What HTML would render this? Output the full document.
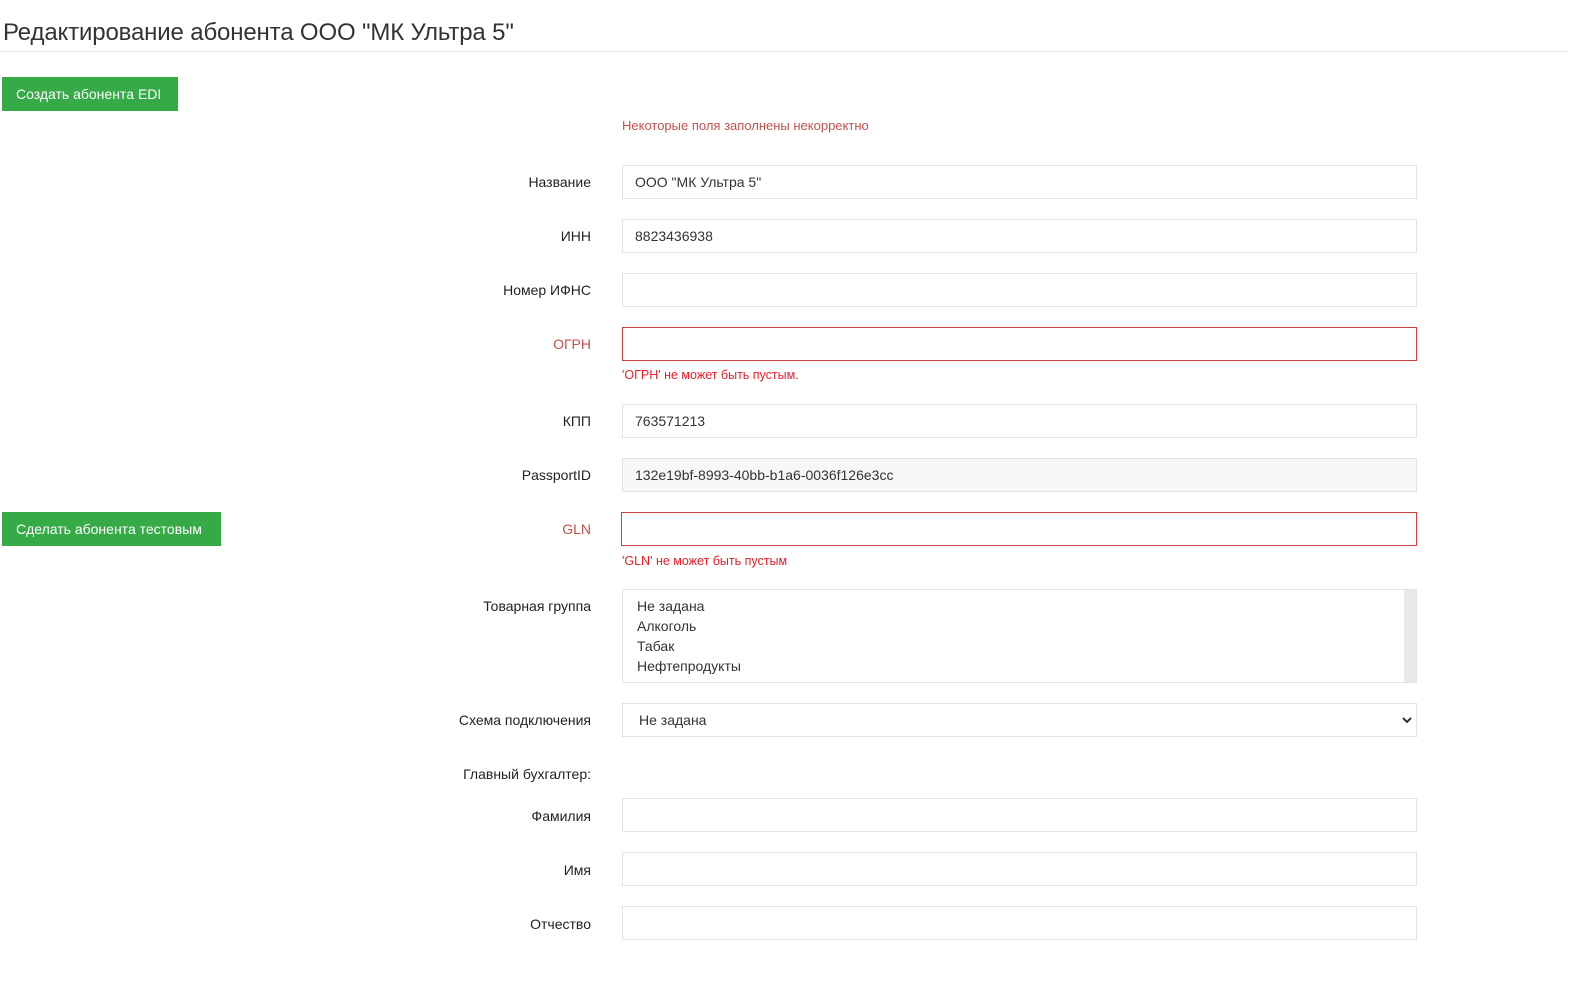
<!DOCTYPE html>
<html><head><meta charset="utf-8"><style>
body{margin:0;width:1571px;height:986px;background:#fff;font-family:"Liberation Sans","DejaVu Sans",sans-serif;color:#222;position:relative;overflow:hidden}
.a{position:absolute}
h1{position:absolute;left:3px;top:19px;margin:0;font-weight:normal;font-size:24px;color:#333;letter-spacing:-0.15px}
.hr{position:absolute;left:0;top:51px;width:1568px;height:1px;background:#eaeaea}
.btn{position:absolute;left:2px;height:34px;background:#37aa48;color:#fff;font-size:14px;line-height:34px;padding:0 14px;box-sizing:border-box}
.lbl{position:absolute;right:980px;font-size:14px;color:#222;text-align:right;white-space:nowrap}
.lbl.err{color:#c4504f}
.in{position:absolute;left:622px;width:795px;height:34px;border:1px solid #e2e2e2;box-sizing:border-box;font-size:14px;line-height:32px;padding-left:12px;color:#333}
.in.bad{border-color:#c9403f}
.in.dis{background:#f7f7f7}
.msg{position:absolute;left:622px;font-size:12.5px;color:#e8202a}
</style></head><body>
<h1>Редактирование абонента ООО "МК Ультра 5"</h1>
<div class="hr"></div>
<div class="btn" style="top:77px;width:176px">Создать абонента EDI</div>
<div class="a" style="left:622px;top:118px;font-size:13px;color:#c4504f">Некоторые поля заполнены некорректно</div>

<div class="lbl" style="top:174px">Название</div>
<div class="in" style="top:165px">ООО "МК Ультра 5"</div>
<div class="lbl" style="top:228px">ИНН</div>
<div class="in" style="top:219px">8823436938</div>
<div class="lbl" style="top:282px">Номер ИФНС</div>
<div class="in" style="top:273px"></div>
<div class="lbl err" style="top:336px">ОГРН</div>
<div class="in bad" style="top:327px"></div>
<div class="msg" style="top:368px">'ОГРН' не может быть пустым.</div>
<div class="lbl" style="top:413px">КПП</div>
<div class="in" style="top:404px">763571213</div>
<div class="lbl" style="top:467px">PassportID</div>
<div class="in dis" style="top:458px">132e19bf-8993-40bb-b1a6-0036f126e3cc</div>
<div class="btn" style="top:512px;width:219px">Сделать абонента тестовым</div>
<div class="lbl err" style="top:521px">GLN</div>
<div class="in bad" style="top:512px;left:621px;width:796px"></div>
<div class="msg" style="top:554px">'GLN' не может быть пустым</div>

<div class="lbl" style="top:598px">Товарная группа</div>
<div class="in" style="top:589px;height:94px;line-height:20px;padding:6px 0 0 14px">Не задана<br>Алкоголь<br>Табак<br>Нефтепродукты
<div class="a" style="right:0;top:0;width:12px;height:92px;background:#e8e8e8"></div></div>

<div class="lbl" style="top:712px">Схема подключения</div>
<div class="in" style="top:703px;padding-left:16px">Не задана
<svg class="a" style="right:4px;top:12px" width="10" height="8" viewBox="0 0 10 8"><path d="M1 2l4 4 4-4" stroke="#333" stroke-width="2" fill="none"/></svg></div>

<div class="lbl" style="top:766px">Главный бухгалтер:</div>
<div class="lbl" style="top:808px">Фамилия</div>
<div class="in" style="top:798px"></div>
<div class="lbl" style="top:862px">Имя</div>
<div class="in" style="top:852px"></div>
<div class="lbl" style="top:916px">Отчество</div>
<div class="in" style="top:906px"></div>
</body></html>
